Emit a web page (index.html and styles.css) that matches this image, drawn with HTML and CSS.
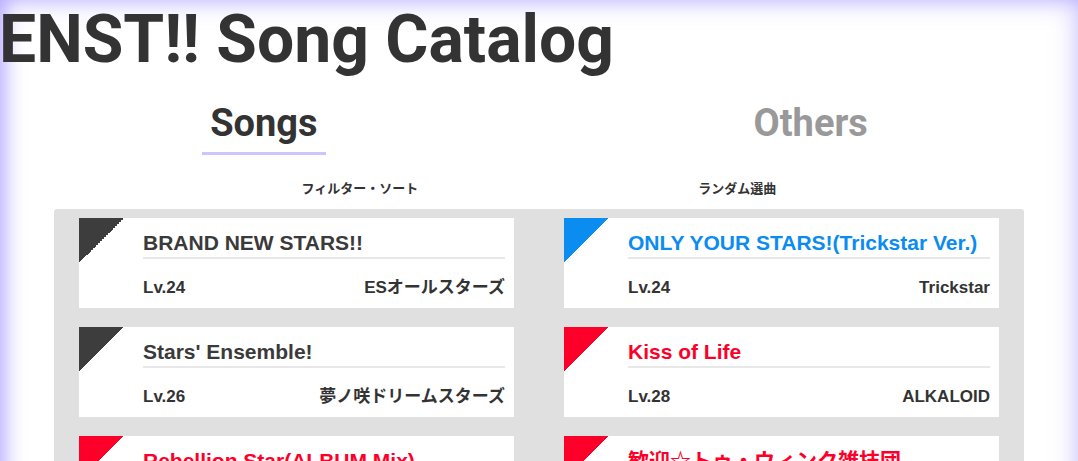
FILE: index.html
```html
<!DOCTYPE html>
<html lang="ja">
<head>
<meta charset="utf-8">
<title>ENST!! Song Catalog</title>
<link rel="stylesheet" href="styles.css">
</head>
<body>
<div class="page">
  <h1 class="page-title">ENST!! Song Catalog</h1>

  <nav class="tabs">
    <a class="tab tab-active">Songs</a>
    <a class="tab">Others</a>
  </nav>

  <div class="actions">
    <span class="action">フィルター・ソート</span>
    <span class="action">ランダム選曲</span>
  </div>

  <section class="song-panel">
    <article class="song song-dark">
      <div class="corner"></div>
      <div class="song-body">
        <div class="song-title">BRAND NEW STARS!!</div>
        <div class="song-meta"><span>Lv.24</span><span>ESオールスターズ</span></div>
      </div>
    </article>
    <article class="song song-blue">
      <div class="corner"></div>
      <div class="song-body">
        <div class="song-title">ONLY YOUR STARS!(Trickstar Ver.)</div>
        <div class="song-meta"><span>Lv.24</span><span>Trickstar</span></div>
      </div>
    </article>
    <article class="song song-dark">
      <div class="corner"></div>
      <div class="song-body">
        <div class="song-title">Stars' Ensemble!</div>
        <div class="song-meta"><span>Lv.26</span><span>夢ノ咲ドリームスターズ</span></div>
      </div>
    </article>
    <article class="song song-red">
      <div class="corner"></div>
      <div class="song-body">
        <div class="song-title">Kiss of Life</div>
        <div class="song-meta"><span>Lv.28</span><span>ALKALOID</span></div>
      </div>
    </article>
    <article class="song song-red">
      <div class="corner"></div>
      <div class="song-body">
        <div class="song-title">Rebellion Star(ALBUM Mix)</div>
        <div class="song-meta"><span>Lv.25</span><span>UNDEAD</span></div>
      </div>
    </article>
    <article class="song song-red">
      <div class="corner"></div>
      <div class="song-body">
        <div class="song-title">歓迎☆トゥ・ウィンク雑技団</div>
        <div class="song-meta"><span>Lv.27</span><span>2wink</span></div>
      </div>
    </article>
  </section>
</div>
</body>
</html>
```

FILE: styles.css
```css
html, body {
  margin: 0;
  padding: 0;
  background: #ffffff;
}

body {
  font-family: "Liberation Sans", "Noto Sans CJK JP", sans-serif;
  color: #333333;
}

.page {
  min-height: 700px;
  padding-bottom: 40px;
  box-shadow: inset 0 0 26px rgba(150, 135, 255, 0.55), inset 8px 0 18px -4px rgba(150, 135, 255, 0.45);
}

.page-title {
  margin: 0 0 0 -1px;
  padding-top: 2px;
  font-family: Roboto, sans-serif;
  font-weight: 700;
  font-size: 66px;
  line-height: 76px;
  color: #333333;
}

.tabs {
  display: flex;
  justify-content: center;
  gap: 420px;
  margin-top: 23px;
}

.tab {
  display: block;
  padding: 0 8px 7px;
  font-family: Roboto, sans-serif;
  font-weight: 700;
  font-size: 38px;
  line-height: 44px;
  color: #999999;
  border-bottom: 3px solid transparent;
}

.tab-active {
  color: #333333;
  border-bottom-color: #cbc4ff;
}

.actions {
  display: flex;
  justify-content: center;
  gap: 280px;
  margin-top: 24px;
}

.action {
  font-family: "Noto Sans CJK JP", sans-serif;
  font-weight: 700;
  font-size: 13px;
  line-height: 18px;
  color: #333333;
}

.song-panel {
  width: 970px;
  box-sizing: border-box;
  margin: 12px auto 0;
  padding: 9px 25px 20px;
  background: #e0e0e0;
  border-radius: 3px;
  display: grid;
  grid-template-columns: 435px 435px;
  column-gap: 50px;
  row-gap: 19px;
}

.song {
  display: flex;
  height: 90px;
  box-sizing: border-box;
  background: #ffffff;
  padding: 13px 9px 0 0;
}

.corner {
  flex: none;
  width: 45px;
  height: 45px;
  margin-top: -13px;
  margin-right: 19px;
}

.song-dark .corner { background: linear-gradient(135deg, #3d3d3d 50%, transparent 50%); }
.song-blue .corner { background: linear-gradient(135deg, #0a8cf0 50%, transparent 50%); }
.song-red .corner { background: linear-gradient(135deg, #fc0029 50%, transparent 50%); }

.song-body {
  flex: 1;
  min-width: 0;
}

.song-title {
  font-weight: 700;
  font-size: 21px;
  line-height: 24px;
  padding-bottom: 2px;
  border-bottom: 2px solid #e8e8e8;
  white-space: nowrap;
  color: #3a3a3a;
}

.song-blue .song-title { color: #0a8cf0; }
.song-red .song-title { color: #fc0029; }

.song-meta {
  display: flex;
  justify-content: space-between;
  margin-top: 19px;
  font-weight: 700;
  font-size: 17px;
  line-height: 20px;
  color: #333333;
}
```
